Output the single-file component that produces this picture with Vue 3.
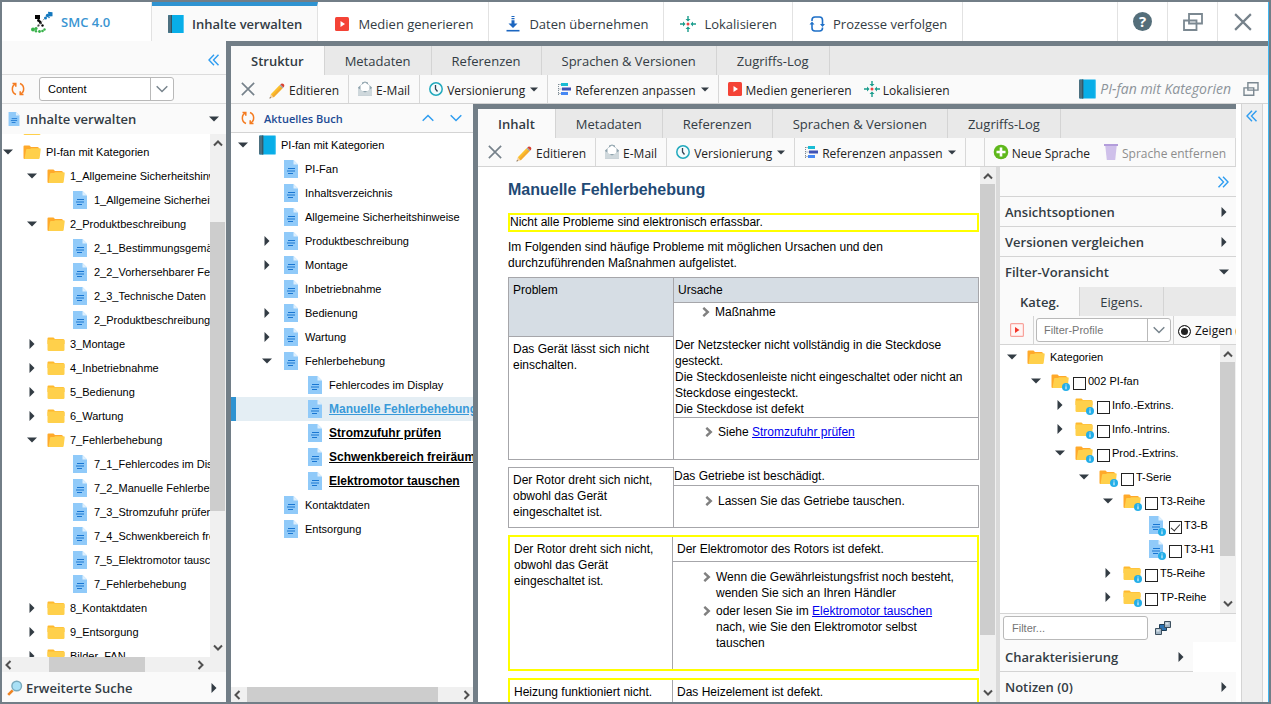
<script setup>
import { ref } from 'vue'

const mainTabs = [
  { text: 'Inhalte verwalten', icon: 'book', active: true },
  { text: 'Medien generieren', icon: 'play' },
  { text: 'Daten übernehmen', icon: 'download' },
  { text: 'Lokalisieren', icon: 'local' },
  { text: 'Prozesse verfolgen', icon: 'sync' },
]
const bookTabs = ['Struktur', 'Metadaten', 'Referenzen', 'Sprachen & Versionen', 'Zugriffs-Log']
const docTabs = ['Inhalt', 'Metadaten', 'Referenzen', 'Sprachen & Versionen', 'Zugriffs-Log']

const node = (level, text, icon = 'doc', arrow = '', extra = {}) => ({ level, text, icon, arrow, ...extra })

const contentTree = [
  node(0, '', 'folder'),
  node(0, 'PI-fan mit Kategorien', 'folder-open', 'down'),
  node(1, '1_Allgemeine Sicherheitshinweise', 'folder-open', 'down'),
  node(2, '1_Allgemeine Sicherheitshinweise'),
  node(1, '2_Produktbeschreibung', 'folder-open', 'down'),
  node(2, '2_1_Bestimmungsgemäße Verwendung'),
  node(2, '2_2_Vorhersehbarer Fehlgebrauch'),
  node(2, '2_3_Technische Daten'),
  node(2, '2_Produktbeschreibung'),
  node(1, '3_Montage', 'folder', 'right'),
  node(1, '4_Inbetriebnahme', 'folder', 'right'),
  node(1, '5_Bedienung', 'folder', 'right'),
  node(1, '6_Wartung', 'folder', 'right'),
  node(1, '7_Fehlerbehebung', 'folder-open', 'down'),
  node(2, '7_1_Fehlercodes im Display'),
  node(2, '7_2_Manuelle Fehlerbehebung'),
  node(2, '7_3_Stromzufuhr prüfen'),
  node(2, '7_4_Schwenkbereich freiräumen'),
  node(2, '7_5_Elektromotor tauschen'),
  node(2, '7_Fehlerbehebung'),
  node(1, '8_Kontaktdaten', 'folder', 'right'),
  node(1, '9_Entsorgung', 'folder', 'right'),
  node(1, 'Bilder_FAN', 'folder', 'right'),
]

const bookTree = [
  node(0, 'PI-fan mit Kategorien', 'book', 'down'),
  node(1, 'PI-Fan'),
  node(1, 'Inhaltsverzeichnis'),
  node(1, 'Allgemeine Sicherheitshinweise'),
  node(1, 'Produktbeschreibung', 'doc', 'right'),
  node(1, 'Montage', 'doc', 'right'),
  node(1, 'Inbetriebnahme'),
  node(1, 'Bedienung', 'doc', 'right'),
  node(1, 'Wartung', 'doc', 'right'),
  node(1, 'Fehlerbehebung', 'doc', 'down'),
  node(2, 'Fehlercodes im Display'),
  node(2, 'Manuelle Fehlerbehebung', 'doc', '', { link: true, selected: true }),
  node(2, 'Stromzufuhr prüfen', 'doc', '', { link: true }),
  node(2, 'Schwenkbereich freiräumen', 'doc', '', { link: true }),
  node(2, 'Elektromotor tauschen', 'doc', '', { link: true }),
  node(1, 'Kontaktdaten'),
  node(1, 'Entsorgung'),
]

const filterTree = ref([
  node(0, 'Kategorien', 'folder-open', 'down'),
  node(1, '002 PI-fan', 'folder-open', 'down', { check: false }),
  node(2, 'Info.-Extrins.', 'folder', 'right', { check: false }),
  node(2, 'Info.-Intrins.', 'folder', 'right', { check: false }),
  node(2, 'Prod.-Extrins.', 'folder-open', 'down', { check: false }),
  node(3, 'T-Serie', 'folder-open', 'down', { check: false }),
  node(4, 'T3-Reihe', 'folder-open', 'down', { check: false }),
  node(5, 'T3-B', 'doc', '', { check: true }),
  node(5, 'T3-H1', 'doc', '', { check: false }),
  node(4, 'T5-Reihe', 'folder', 'right', { check: false }),
  node(4, 'TP-Reihe', 'folder', 'right', { check: false }),
])

const indent = (n) => ({ paddingLeft: `${n.level * 24}px` })
</script>

<template>
  <svg class="sprite" aria-hidden="true">
    <symbol id="i-book" viewBox="0 0 16 18"><rect width="16" height="18" rx="1" fill="#08aee8" /><path d="M1 0h3v18H1a1 1 0 0 1-1-1V1a1 1 0 0 1 1-1z" fill="#4c7080" /><path d="M3 0h1v18H3z" fill="#2f5566" /><path d="M15 0.500h.6v17H15z" fill="#8bdcf8" /></symbol>
    <symbol id="i-play" viewBox="0 0 16 16"><rect x="1" y="1" width="14" height="14" rx="1.500" fill="#f44336" /><path d="M6.500 5v6l4.500-3z" fill="#fff" /></symbol>
    <symbol id="i-download" viewBox="0 0 16 16"><path d="M1.500 14.700h13" stroke="#1c66c0" stroke-width="1.600" /><path d="M6.500 0h3v1h-3zM6.500 2h3v1.300h-3zM6.500 4.300h3V7.500H12.500L8 12 3.500 7.500h3z" fill="#1c66c0" /></symbol>
    <symbol id="i-local" viewBox="0 0 16 16"><circle cx="8" cy="8" r="1.500" fill="#ef4444" /><g fill="#1a9c8c"><path d="M7.300 0h1.400v3h1.800L8 5.500 5.500 3h1.800zM7.300 16h1.400v-3h1.800L8 10.500 5.500 13h1.800zM0 7.300h3V5.500L5.500 8 3 10.500V8.700H0zM16 7.300h-3V5.500L10.500 8l2.500 2.500V8.700h3z" /></g></symbol>
    <symbol id="i-sync" viewBox="0 0 16 16"><g fill="none" stroke="#1f70c8" stroke-width="1.600"><path d="M3 5V4a3 3 0 0 1 3-3h4.500a3 3 0 0 1 3 3v5.500M13.500 11.500v.5a3 3 0 0 1-3 3H6a3 3 0 0 1-3-3V7" /></g><path d="M3 5.500l2.500 3h-5zM13.500 11L11 8h5z" fill="#1f70c8" /></symbol>
    <symbol id="i-win" viewBox="0 0 20 18"><g fill="none" stroke="#7b8891" stroke-width="1.800"><path d="M6 1h13v9.500H6z" /><path d="M1 7.500h12.500V17H1z" /></g></symbol>
    <symbol id="i-x" viewBox="0 0 16 16"><path d="M1 1l14 14M15 1L1 15" stroke="#76828b" stroke-width="1.900" fill="none" /></symbol>
    <symbol id="i-pencil" viewBox="0 0 16 16"><path d="M0.500 15.500l1.300-4.200 2.900 2.900z" fill="#f3cfa0" /><path d="M0.500 15.500l.5-1.500 1 1z" fill="#444" /><path d="M1.800 11.300L10.500 2.300l3 3-8.800 8.900z" fill="#fbc02d" /><path d="M3.200 12.700L12 3.800l1.500 1.500-8.800 8.900z" fill="#f4a92e" /><path d="M10.500 2.300l.9-.9 3 3-.9.9z" fill="#90a4ae" /><path d="M11.400 1.400c1-1.300 2.300-1.300 3.200-.300s1.200 2.200-.200 3.300z" fill="#d84030" /></symbol>
    <symbol id="i-mail" viewBox="0 0 16 16"><path d="M1 6.500L5 3V1.500L8 .5l3 1V3l4 3.500v8H1z" fill="#90a4ae" /><path d="M3.500 4.500L8 1.500l4.500 3V10h-9z" fill="#fff" /><path d="M1 7l7 4.500L15 7v7.500H1z" fill="#cfd8dc" /></symbol>
    <symbol id="i-clock" viewBox="0 0 16 16"><circle cx="8" cy="8" r="6.200" fill="#f4fbfd" stroke="#22a9bd" stroke-width="1.500" /><path d="M7.500 4V8l2 2.500" fill="none" stroke="#345" stroke-width="1.300" /></symbol>
    <symbol id="i-refs" viewBox="0 0 16 16"><path d="M5 2h7v3H5z" fill="#18bcd4" /><path d="M6 6.500h9v3H6z" fill="#3f51b5" /><path d="M5 11h7v3H5z" fill="#4688f4" /><path d="M2.500 3v11M2.500 3.500H5M2.500 8H6M2.500 12.500H5" stroke="#7d8b94" stroke-dasharray="1 1" fill="none" /></symbol>
    <symbol id="i-plus" viewBox="0 0 16 16"><circle cx="8" cy="8" r="7.300" fill="#5fb81c" /><path d="M8 3.500v9M3.500 8h9" stroke="#fff" stroke-width="2.600" /></symbol>
    <symbol id="i-trash" viewBox="0 0 16 16"><path d="M2.300 2h11.400l-1.500 14H3.800z" fill="#cfc0ea" /><path d="M1 0h14v2H1z" fill="#b39ddb" /></symbol>
    <symbol id="i-doc" viewBox="0 0 14 18"><path d="M0 0h9.500L14 4.500V18H0z" fill="#90caf9" /><path d="M9.500 0v4.500H14z" fill="#dff0fd" /><path d="M4 8.500h7M3 11h8M4 13.500h5" stroke="#1976d2" stroke-width="1.100" /></symbol>
    <symbol id="i-folder" viewBox="0 0 18 16"><path d="M1.500 1.500h5l1.500 1.500h8a1.500 1.500 0 0 1 1.500 1.500V8H.5V2.500a1 1 0 0 1 1-1z" fill="#ffb92e" /><rect x=".5" y="3.500" width="17" height="11.500" rx="1.200" fill="#ffd04b" /></symbol>
    <symbol id="i-folder-open" viewBox="0 0 18 16"><path d="M1.500 1.500h5l1.500 1.500h6.500a1.500 1.500 0 0 1 1.500 1.500V14l-1 1H1.500a1 1 0 0 1-1-1V2.500a1 1 0 0 1 1-1z" fill="#ffa92a" /><path d="M4 5h3l1.300-.800h8.200a1.200 1.200 0 0 1 1.200 1.400l-1 8.200a1.300 1.300 0 0 1-1.300 1.200H1.500L3 6a1.200 1.200 0 0 1 1-1z" fill="#ffd04b" /></symbol>
    <symbol id="i-info" viewBox="0 0 8 8"><circle cx="4" cy="4" r="4" fill="#23aee8" /><path d="M3.500 3.200h1v3h-1zM3.500 1.500h1v1h-1z" fill="#fff" /></symbol>
    <symbol id="i-down" viewBox="0 0 10 6"><path d="M0 .5h10L5 5.500z" fill="#333c44" /></symbol>
    <symbol id="i-right" viewBox="0 0 6 10"><path d="M.5 0v10L5.500 5z" fill="#333c44" /></symbol>
    <symbol id="i-refresh" viewBox="0 0 14 14"><g fill="none" stroke="#f47b20" stroke-width="1.500"><path d="M4.800 1.800A5.800 5.800 0 0 0 5 12.500M9.200 12.200A5.800 5.800 0 0 0 9 1.500" /><path d="M1.500 1.500h3.300v3.300M12.500 12.500H9.200V9.200" /></g></symbol>
    <symbol id="i-dleft" viewBox="0 0 12 12"><path d="M6 .7L1 6l5 5.300M10.500 .7L5.500 6l5 5.300" fill="none" stroke="#2f9df0" stroke-width="1.400" /></symbol>
    <symbol id="i-dright" viewBox="0 0 12 12"><path d="M6 .7L11 6l-5 5.300M1.500 .7L6.500 6l-5 5.300" fill="none" stroke="#2f9df0" stroke-width="1.400" /></symbol>
    <symbol id="i-chev" viewBox="0 0 12 8"><path d="M.7 1.200L6 6.500l5.300-5.300" fill="none" stroke="currentColor" stroke-width="1.500" /></symbol>
    <symbol id="i-bar" viewBox="0 0 10 8"><path d="M1 1.500l4 4 4-4" fill="none" stroke="currentColor" stroke-width="2" /></symbol>
    <symbol id="i-search" viewBox="0 0 16 16"><path d="M1.200 14.800l4.500-4.500" stroke="#ee8322" stroke-width="2.600" /><circle cx="9.700" cy="6" r="4.800" fill="#a9e0f5" stroke="#78a9bc" stroke-width="1.400" /></symbol>
    <symbol id="i-playbox" viewBox="0 0 14 14"><rect x=".6" y=".6" width="12.800" height="12.800" rx="1" fill="#fff5f4" stroke="#f8a29b" stroke-width="1.200" /><path d="M5 4v6l4.500-3z" fill="#f2352a" /></symbol>
    <symbol id="i-cubes" viewBox="0 0 16 14"><path d="M4.500 3.500h7v6h-7z" fill="#2c72b0" stroke="#1d3c55" /><path d="M.5 7.500h6v6h-6zM9.500.5h6v6h-6z" fill="#a3b6c6" stroke="#3c4f5e" /><path d="M1.500 8.500h3v2h-3zM10.500 1.500h3v2h-3z" fill="#dbe5ec" /></symbol>
    <symbol id="i-bullet" viewBox="0 0 8 10"><path d="M1.300 .8L5.800 5 1.300 9.200" fill="none" stroke="#808080" stroke-width="2.400" /></symbol>
    <symbol id="i-logo" viewBox="0 0 22 22"><g fill="#050505"><path d="M4 4h5v4H4z" /><circle cx="7.500" cy="9.500" r="1.400" /><circle cx="9.500" cy="12" r="1.300" /><circle cx="11.500" cy="14.500" r="1.200" /><circle cx="7.500" cy="14.500" r="1" /><circle cx="9" cy="10.700" r="1.300" /></g><path d="M5.500 16.500L14 7" stroke="#999" stroke-dasharray="1.500 1" /><g fill="#1478be"><path d="M17 .8l4.500.4v4l-4 .3z" /><circle cx="16.500" cy="4.500" r="1.700" /><circle cx="14.500" cy="7" r="1.500" /><circle cx="18" cy="6.500" r=".8" /></g><g fill="#38b24a"><circle cx="2" cy="18.500" r="2" /><circle cx="5" cy="17.500" r="1.600" /><circle cx="5" cy="20.200" r="1.200" /><circle cx="8.500" cy="20.500" r="1.400" /><circle cx="11.500" cy="20" r="1.300" /><circle cx="13.500" cy="18.500" r="1.200" /></g></symbol>
  </svg>

  <div class="app">
    <header class="top">
      <div class="brand"><svg class="logo"><use href="#i-logo" /></svg><strong>SMC 4.0</strong></div>
      <nav class="main-tabs">
        <button v-for="t in mainTabs" :key="t.text" :class="{ active: t.active }">
          <svg :class="['ic', t.icon === 'book' && 'tall']"><use :href="'#i-' + t.icon" /></svg>{{ t.text }}
        </button>
      </nav>
      <div class="window-buttons">
        <button aria-label="Hilfe"><span class="help">?</span></button>
        <button aria-label="Fenster"><svg class="win"><use href="#i-win" /></svg></button>
        <button aria-label="Schließen"><svg class="ic close"><use href="#i-x" /></svg></button>
      </div>
    </header>

    <aside class="sidebar">
      <div class="side-top"><button class="plain" aria-label="Einklappen"><svg class="dbl"><use href="#i-dleft" /></svg></button></div>
      <div class="side-source">
        <button class="plain" aria-label="Aktualisieren"><svg class="refresh"><use href="#i-refresh" /></svg></button>
        <div class="combo source">
          <select aria-label="Quelle"><option>Content</option></select>
          <span class="combo-btn"><svg class="chev"><use href="#i-chev" /></svg></span>
        </div>
      </div>
      <button class="side-head"><svg class="doc-sm"><use href="#i-doc" /></svg><b>Inhalte verwalten</b><svg class="a-down"><use href="#i-down" /></svg></button>
      <div class="side-tree">
        <div class="tree content-tree">
          <div v-for="(n, i) in contentTree" :key="i" class="row" :style="indent(n)">
            <span class="slot"><svg v-if="n.arrow" :class="'a-' + n.arrow"><use :href="'#i-' + n.arrow" /></svg></span>
            <span class="glyph"><svg :class="'g-' + n.icon"><use :href="'#i-' + n.icon" /></svg></span>
            <span>{{ n.text }}</span>
          </div>
        </div>
        <div class="vbar">
          <svg class="sb up"><use href="#i-bar" /></svg>
          <div class="track"><i class="thumb side-thumb"></i></div>
          <svg class="sb"><use href="#i-bar" /></svg>
        </div>
      </div>
      <div class="hbar side-hbar">
        <svg class="sb left"><use href="#i-bar" /></svg>
        <div class="track"><i class="thumb"></i></div>
        <svg class="sb right"><use href="#i-bar" /></svg>
      </div>
      <button class="side-foot"><svg class="ic"><use href="#i-search" /></svg><b>Erweiterte Suche</b><svg class="a-right"><use href="#i-right" /></svg></button>
    </aside>

    <main class="main">
      <nav class="tabs"><button v-for="(t, i) in bookTabs" :key="t" :class="{ active: i === 0 }">{{ t }}</button></nav>
      <div class="toolbar">
        <button class="x" aria-label="Schließen"><svg class="ic14"><use href="#i-x" /></svg></button>
        <button class="line edit"><svg class="ic"><use href="#i-pencil" /></svg>Editieren</button>
        <button class="line"><svg class="ic lift"><use href="#i-mail" /></svg>E-Mail</button>
        <button class="line"><svg class="ic lift"><use href="#i-clock" /></svg>Versionierung<svg class="caret"><use href="#i-down" /></svg></button>
        <button class="line"><svg class="ic lift"><use href="#i-refs" /></svg>Referenzen anpassen<svg class="caret"><use href="#i-down" /></svg></button>
        <button><svg class="ic lift"><use href="#i-play" /></svg>Medien generieren</button>
        <button class="tight"><svg class="ic lift"><use href="#i-local" /></svg>Lokalisieren</button>
        <div class="current"><svg class="g-book"><use href="#i-book" /></svg><em>PI-fan mit Kategorien</em>
          <button class="plain" aria-label="Neues Fenster"><svg class="win-sm"><use href="#i-win" /></svg></button></div>
      </div>

      <div class="body">
        <section class="book">
          <div class="book-head">
            <button class="plain" aria-label="Aktualisieren"><svg class="refresh"><use href="#i-refresh" /></svg></button>
            <b>Aktuelles Buch</b>
            <button class="plain blue" aria-label="Vorheriges"><svg class="nav-chev up"><use href="#i-chev" /></svg></button>
            <button class="plain blue" aria-label="Nächstes"><svg class="nav-chev"><use href="#i-chev" /></svg></button>
          </div>
          <div class="tree padded">
            <div v-for="n in bookTree" :key="n.text" class="row" :class="{ selected: n.selected }">
              <div class="inner" :style="indent(n)">
                <span class="slot"><svg v-if="n.arrow" :class="'a-' + n.arrow"><use :href="'#i-' + n.arrow" /></svg></span>
                <span class="glyph"><svg :class="'g-' + n.icon"><use :href="'#i-' + n.icon" /></svg></span>
                <a v-if="n.link" href="#">{{ n.text }}</a><span v-else>{{ n.text }}</span>
              </div>
            </div>
          </div>
          <div class="hbar book-hbar">
            <svg class="sb left"><use href="#i-bar" /></svg>
            <div class="track"><i class="thumb"></i></div>
            <svg class="sb right"><use href="#i-bar" /></svg>
          </div>
        </section>

        <section class="content">
          <nav class="tabs"><button v-for="(t, i) in docTabs" :key="t" :class="{ active: i === 0 }">{{ t }}</button></nav>
          <div class="toolbar">
            <button class="x" aria-label="Schließen"><svg class="ic14"><use href="#i-x" /></svg></button>
            <button class="line edit"><svg class="ic"><use href="#i-pencil" /></svg>Editieren</button>
            <button class="line"><svg class="ic lift"><use href="#i-mail" /></svg>E-Mail</button>
            <button class="line"><svg class="ic lift"><use href="#i-clock" /></svg>Versionierung<svg class="caret"><use href="#i-down" /></svg></button>
            <button class="line"><svg class="ic lift"><use href="#i-refs" /></svg>Referenzen anpassen<svg class="caret"><use href="#i-down" /></svg></button>
            <div class="lang">
              <button><svg class="ic lift"><use href="#i-plus" /></svg>Neue Sprache</button>
              <button class="off" disabled><svg class="ic lift"><use href="#i-trash" /></svg>Sprache entfernen</button>
            </div>
          </div>

          <div class="split">
            <article class="doc">
              <h1>Manuelle Fehlerbehebung</h1>
              <p class="mark">Nicht alle Probleme sind elektronisch erfassbar.</p>
              <p class="intro">Im Folgenden sind häufige Probleme mit möglichen Ursachen und den<br />durchzuführenden Maßnahmen aufgelistet.</p>
              <table>
                <tbody>
                  <tr><th rowspan="2" class="c1">Problem</th><th class="cause-head">Ursache</th></tr>
                  <tr><td class="measure"><ul><li><svg><use href="#i-bullet" /></svg>Maßnahme</li></ul></td></tr>
                  <tr>
                    <td rowspan="2" class="c1">Das Gerät lässt sich nicht<br />einschalten.</td>
                    <td class="causes">Der Netzstecker nicht vollständig in die Steckdose<br />gesteckt.<br />Die Steckdosenleiste nicht eingeschaltet oder nicht an<br />Steckdose eingesteckt.<br />Die Steckdose ist defekt</td>
                  </tr>
                  <tr><td class="see"><ul><li><svg><use href="#i-bullet" /></svg><span>Siehe <a href="#">Stromzufuhr prüfen</a></span></li></ul></td></tr>
                </tbody>
              </table>
              <table>
                <tbody>
                  <tr><td rowspan="2" class="c1">Der Rotor dreht sich nicht,<br />obwohl das Gerät<br />eingeschaltet ist.</td><td class="open">Das Getriebe ist beschädigt.</td></tr>
                  <tr><td class="gear"><ul><li><svg><use href="#i-bullet" /></svg>Lassen Sie das Getriebe tauschen.</li></ul></td></tr>
                </tbody>
              </table>
              <table class="marked">
                <tbody>
                  <tr><td rowspan="2" class="c1">Der Rotor dreht sich nicht,<br />obwohl das Gerät<br />eingeschaltet ist.</td><td class="cause">Der Elektromotor des Rotors ist defekt.</td></tr>
                  <tr>
                    <td class="steps">
                      <ul>
                        <li><svg><use href="#i-bullet" /></svg><span>Wenn die Gewährleistungsfrist noch besteht,<br />wenden Sie sich an Ihren Händler</span></li>
                        <li><svg><use href="#i-bullet" /></svg><span>oder lesen Sie im <a href="#">Elektromotor tauschen</a><br />nach, wie Sie den Elektromotor selbst<br />tauschen</span></li>
                      </ul>
                    </td>
                  </tr>
                </tbody>
              </table>
              <table class="marked">
                <tbody>
                  <tr><td class="c1 heat">Heizung funktioniert nicht.</td><td class="cause">Das Heizelement ist defekt.</td></tr>
                </tbody>
              </table>
            </article>
            <div class="vbar doc-bar">
              <svg class="sb up"><use href="#i-bar" /></svg>
              <div class="track"><i class="thumb"></i></div>
              <svg class="sb"><use href="#i-bar" /></svg>
            </div>

            <aside class="options">
              <div class="opt-top"><button class="plain" aria-label="Ausklappen"><svg class="dbl"><use href="#i-dright" /></svg></button></div>
              <button class="opt"><b>Ansichtsoptionen</b><svg class="a-right"><use href="#i-right" /></svg></button>
              <button class="opt"><b>Versionen vergleichen</b><svg class="a-right"><use href="#i-right" /></svg></button>
              <button class="opt last"><b>Filter-Voransicht</b><svg class="a-down"><use href="#i-down" /></svg></button>
              <nav class="tabs"><button class="active">Kateg.</button><button>Eigens.</button></nav>
              <div class="filter-bar">
                <button class="plain run" aria-label="Filter anwenden"><svg class="ic14"><use href="#i-playbox" /></svg></button>
                <div class="profile">
                  <div class="combo muted">
                    <select aria-label="Filter-Profile"><option>Filter-Profile</option></select>
                    <span class="combo-btn"><svg class="chev"><use href="#i-chev" /></svg></span>
                  </div>
                </div>
                <label class="radio"><input type="radio" name="mode" checked />Zeigen (</label>
              </div>
              <div class="filter-tree">
                <div class="tree padded">
                  <div v-for="(n, i) in filterTree" :key="i" class="row">
                    <div class="inner" :style="indent(n)">
                      <span class="slot"><svg v-if="n.arrow" :class="'a-' + n.arrow"><use :href="'#i-' + n.arrow" /></svg></span>
                      <span class="glyph"><svg :class="'g-' + n.icon"><use :href="'#i-' + n.icon" /></svg><svg v-if="n.level" class="badge"><use href="#i-info" /></svg></span>
                      <label v-if="n.level" class="check"><input v-model="n.check" type="checkbox" />{{ n.text }}</label>
                      <span v-else>{{ n.text }}</span>
                    </div>
                  </div>
                </div>
                <div class="vbar">
                  <svg class="sb up"><use href="#i-bar" /></svg>
                  <div class="track"><i class="thumb filter-thumb"></i></div>
                  <svg class="sb"><use href="#i-bar" /></svg>
                </div>
              </div>
              <div class="filter-input">
                <input type="text" placeholder="Filter..." aria-label="Filter" />
                <button class="plain" aria-label="Verknüpfungen"><svg class="cubes"><use href="#i-cubes" /></svg></button>
              </div>
              <div class="narrow"><button class="opt"><b>Charakterisierung</b><svg class="a-right"><use href="#i-right" /></svg></button></div>
              <button class="opt last"><b>Notizen (0)</b><svg class="a-right"><use href="#i-right" /></svg></button>
            </aside>
          </div>
        </section>

        <div class="strip"><button class="plain" aria-label="Aufklappen"><svg class="dbl"><use href="#i-dleft" /></svg></button></div>
      </div>
    </main>
  </div>
</template>

<style>
body { margin: 0; background: #727e87; }
</style>

<style scoped>
.sprite { position: absolute; width: 0; height: 0; }
* { box-sizing: border-box; }
svg { display: block; flex: none; }
button { font: inherit; color: inherit; background: none; border: 0; padding: 0; margin: 0; border-radius: 0; display: flex; align-items: center; white-space: nowrap; text-align: left; }
b { font-weight: 600; }

.app { height: 100vh; overflow: hidden; border: 2px solid #727e87; background: #727e87; display: grid; grid-template: 39px minmax(0, 1fr) / 224px minmax(0, 1fr); column-gap: 5px; font: 13px/18px "Open Sans", "Noto Sans", sans-serif; color: #333c44; }

.ic { width: 16px; height: 16px; }
.ic.tall { height: 18px; }
.ic14 { width: 14px; height: 14px; }
.dbl { width: 12px; height: 12px; }
.refresh { width: 14px; height: 14px; }
.chev { width: 12px; height: 8px; color: #78848d; }
.doc-sm { width: 12px; height: 14px; }
.a-down { width: 10px; height: 6px; }
.a-right { width: 6px; height: 10px; }

/* top bar */
.top { grid-column: 1 / -1; background: #fff; display: flex; border-right: 1px solid #41b6f0; }
.brand { width: 150px; display: flex; align-items: center; gap: 8px; padding-left: 29px; border-right: 1px solid #e2e2e2; color: #3a95d2; }
.brand strong { font-weight: 600; }
.logo { width: 22px; height: 22px; }
.main-tabs { display: flex; flex: 1; min-width: 0; }
.main-tabs button { gap: 8px; padding: 5px 15px 0 16px; border-right: 1px solid #e2e2e2; }
.main-tabs .active { background: #fafafa; font-weight: 600; border-top: 4px solid #2f93d1; padding-top: 1px; }
.window-buttons { display: flex; padding-right: 1px; }
.window-buttons button { width: 50px; justify-content: center; border-left: 1px solid #e2e2e2; }
.help { width: 19px; height: 19px; border-radius: 50%; background: #546e7a; color: #fff; font-weight: 700; font-size: 15px; line-height: 19px; text-align: center; }
.win { width: 20px; height: 18px; }
.close { width: 18px; height: 18px; }

/* sidebar */
.sidebar { background: #fafafa; display: flex; flex-direction: column; min-height: 0; }
.side-top { height: 34px; display: flex; align-items: center; justify-content: flex-end; padding: 5px 6px 0 0; border-bottom: 1px solid #dcdcdc; }
.side-source { height: 29px; display: flex; align-items: center; gap: 14px; padding-left: 9px; border-bottom: 1px solid #dcdcdc; }
.combo { position: relative; height: 24px; border: 1px solid #b9b9b9; border-radius: 3px; background: #fff; display: flex; }
.combo select { appearance: none; border: 0; background: transparent; flex: 1; width: 100%; padding: 0 8px; font: 11px "Liberation Sans", Arial, sans-serif; color: #000; }
.combo-btn { position: absolute; right: 0; top: 0; bottom: 0; width: 23px; border-left: 1px solid #b9b9b9; display: flex; align-items: center; justify-content: center; pointer-events: none; }
.muted select { color: #757575; padding: 0 7px; }
.source { width: 135px; }
.side-head { height: 30px; padding: 0 7px 0 6px; gap: 6px; }
.side-head b, .side-foot b { flex: 1; }
.side-tree { flex: 1; min-height: 0; display: flex; background: #fff; }
.side-foot { height: 30px; padding: 2px 9px 0 5px; gap: 3px; }

.tree { flex: 1; min-width: 0; overflow: hidden; background: #fff; font: 11px/14px "Liberation Sans", Arial, sans-serif; color: #000; }
.row { height: 24px; display: flex; align-items: center; white-space: nowrap; }
.content-tree .row:first-child { margin-top: -18px; }
.padded .row { padding-left: 6px; }
.inner { display: flex; align-items: center; }
.slot { width: 12px; margin-right: 9px; flex: none; display: flex; justify-content: center; }
.glyph { width: 18px; margin-right: 5px; flex: none; display: flex; justify-content: center; position: relative; }
.g-folder, .g-folder-open { width: 18px; height: 16px; }
.g-doc { width: 14px; height: 18px; }
.g-book { width: 17px; height: 20px; }
.row a { font-size: 12px; font-weight: 700; color: #000; text-decoration: underline; }
.row.selected { background: #e4eef4; box-shadow: inset 5px 0 #2f93d1; }
.row.selected a { color: #3a9ad9; }
.badge { position: absolute; width: 8px; height: 8px; right: -1px; bottom: -2px; }

/* scroll bars */
.vbar { width: 16px; flex: none; background: #f0f0f0; display: flex; flex-direction: column; align-items: center; padding: 5px 1px 5px 0; }
.hbar { height: 15px; flex: none; min-width: 0; background: #f0f0f0; display: flex; align-items: center; padding: 0 1px; }
.vbar .track { flex: 1; width: 100%; margin: 4px 0; display: flex; flex-direction: column; }
.hbar .track { flex: 1; min-width: 0; height: 15px; margin: 0 5px; display: flex; }
.thumb { display: block; flex: none; background: #cdcdcd; }
.sb { width: 10px; height: 8px; color: #505050; }
.up { transform: rotate(180deg); }
.left { transform: rotate(90deg); }
.right { transform: rotate(-90deg); }
.side-thumb { margin-top: 71px; height: 59%; }
.side-hbar { padding-right: 20px; }
.side-hbar .thumb { margin-left: 31px; width: 96px; }
.book-hbar .thumb { width: 91%; }
.doc-bar .thumb { height: 90%; }
.filter-thumb { height: 83%; }

/* tabs and toolbars */
.main { display: flex; flex-direction: column; min-width: 0; min-height: 0; padding-top: 5px; border-right: 1px solid #41b6f0; }
.tabs { height: 29px; flex: none; background: #e9e9e9; display: flex; }
.tabs button { padding: 0 20px; border-right: 1px solid #d4d4d4; }
.tabs .active { background: #fafafa; font-weight: 600; }
.toolbar { height: 29px; flex: none; background: #fafafa; border-bottom: 1px solid #d4d4d4; display: flex; font-size: 12px; line-height: 16px; color: #222; }
.toolbar button { gap: 3px; padding: 4px 9px 0 8px; }
.toolbar .line { border-right: 1px solid #d8d8d8; }
.toolbar .x { padding: 0 8px 0 10px; }
.toolbar .edit { padding-left: 6px; gap: 4px; }
.toolbar .tight { padding-left: 3px; }
.lift { margin-bottom: 4px; }
.caret { width: 8px; height: 5px; margin: 0 0 4px 2px; }
.current { margin-left: auto; display: flex; align-items: center; gap: 4px; font-size: 14px; color: #8d949a; }
.current .plain { padding: 0 9px 0 8px; }
.win-sm { width: 16px; height: 14px; }
.lang { margin-left: auto; display: flex; border-left: 1px solid #d8d8d8; border-right: 1px solid #d8d8d8; }
.lang .off { padding-left: 4px; color: #8d8d8d; }

/* book structure */
.body { flex: 1; min-height: 0; display: grid; grid-template-columns: 242px minmax(0, 1fr) 32px; }
.book { background: #fff; display: flex; flex-direction: column; min-width: 0; min-height: 0; }
.book-head { height: 29px; flex: none; background: #fafafa; border-bottom: 1px solid #d4d4d4; display: flex; align-items: center; gap: 9px; padding: 0 11px 0 10px; font-size: 11px; color: #1d4a94; }
.book-head b { flex: 1; padding-top: 2px; }
.blue { color: #2f9df0; }
.nav-chev { width: 12px; height: 8px; margin-left: 7px; }

/* content */
.content { border: solid #727e87; border-width: 5px 0 0 5px; background: #fafafa; display: flex; flex-direction: column; min-width: 0; min-height: 0; }
.split { flex: 1; min-height: 0; display: grid; grid-template: minmax(0, 1fr) / minmax(0, 1fr) 16px 240px; background: #fff; }
.strip { margin: 0 5px; border: solid #d4d4d4; border-width: 0 1px; background: #eee; display: flex; justify-content: center; align-items: flex-start; padding-top: 6px; box-shadow: -5px 0 #fff, 5px 0 #fafafa; }

.doc { overflow: hidden; padding: 12px 1px 0 30px; font: 12px/16px "Liberation Sans", Arial, sans-serif; color: #000; white-space: nowrap; }
.doc h1 { margin: 0 0 13px; font-size: 16px; line-height: 21px; color: #1f4a75; }
.mark { margin: 0 0 7px; padding: 0; line-height: 15px; border: 2px solid #ff0; }
.intro { margin: 0 0 6px; }
.doc table { width: 100%; table-layout: fixed; border-collapse: collapse; margin-bottom: 7px; }
.doc th, .doc td { border: 1px solid #a6a6aa; padding: 4px; vertical-align: top; text-align: left; font-weight: 400; }
.doc th { background: #d6dde4; }
.doc .c1 { width: 165px; }
.doc .cause-head { height: 25px; }
.doc .measure { height: 34px; padding: 1px 0 0 28px; border-bottom: 0; }
.doc .causes { height: 81px; padding: 0 0 0 1px; border-top: 0; }
.doc .see { height: 42px; padding: 6px 0 0 31px; }
.doc .open { height: 18px; padding: 0; border-top: 0; border-right: 0; }
.doc .gear { height: 42px; padding: 7px 0 0 31px; }
.doc .cause { height: 24px; }
.doc .steps { height: 108px; padding: 7px 0 0 30px; }
.doc ul { list-style: none; margin: 0; padding: 0; }
.doc li { display: flex; gap: 5px; margin-bottom: 2px; }
.doc li svg { width: 8px; height: 10px; margin-top: 3px; }
.doc a { color: #0000ee; }
.doc .marked { border: 2px solid #ff0; border-collapse: separate; border-spacing: 0; }
.doc .marked td { border-width: 0 0 0 1px; }
.doc .marked .c1 { width: 162px; border-width: 0; }
.doc .marked .steps { border-width: 1px 0 0 1px; }
.doc .heat { height: 48px; }

/* options panel */
.options { border-left: 4px solid #dadada; background: #fafafa; display: flex; flex-direction: column; min-height: 0; min-width: 0; }
.opt-top { height: 30px; flex: none; display: flex; justify-content: flex-end; align-items: center; padding-right: 7px; border-bottom: 1px solid #d4d4d4; }
.opt { height: 30px; flex: none; padding: 0 9px 0 5px; border-bottom: 1px solid #d4d4d4; }
.opt b { flex: 1; }
.opt.last { border-bottom: 0; }
.opt .a-down { margin-right: -2px; }
.filter-bar { height: 29px; flex: none; display: flex; align-items: center; border-bottom: 1px solid #d4d4d4; overflow: hidden; font-size: 12px; color: #111; }
.run { padding: 0 9px 0 10px; }
.profile { align-self: stretch; display: flex; align-items: center; padding: 0 2px; border: solid #d4d4d4; border-width: 0 1px; }
.profile .combo { width: 135px; }
.radio { display: flex; align-items: center; gap: 4px; padding: 2px 0 0 4px; white-space: nowrap; }
.radio input { appearance: none; margin: 0; width: 13px; height: 13px; border: 1px solid #222; border-radius: 50%; background: #222; box-shadow: inset 0 0 0 2px #fff; }
.filter-tree { flex: 1; min-height: 0; display: flex; border-bottom: 1px solid #d4d4d4; }
.check { display: flex; align-items: center; gap: 2px; margin-left: -1px; }
.check input { appearance: none; margin: 4px 0 0; width: 13px; height: 13px; border: 1px solid #222; background: #fff; display: flex; justify-content: center; }
.check input:checked::after { content: ""; width: 8px; height: 4px; margin-top: 2px; border: solid #333; border-width: 0 0 1px 1px; transform: rotate(-48deg); }
.filter-input { height: 28px; flex: none; display: flex; align-items: center; gap: 7px; padding-left: 3px; }
.filter-input input { width: 145px; height: 24px; border: 1px solid #b9b9b9; border-radius: 3px; background: #fff; padding: 0 8px; font: 11px "Liberation Sans", Arial, sans-serif; }
.filter-input input::placeholder { color: #757575; }
.cubes { width: 16px; height: 14px; }
.narrow { flex: none; display: grid; background: #fff; padding-right: 43px; }
.narrow .opt { background: #fafafa; }
</style>
